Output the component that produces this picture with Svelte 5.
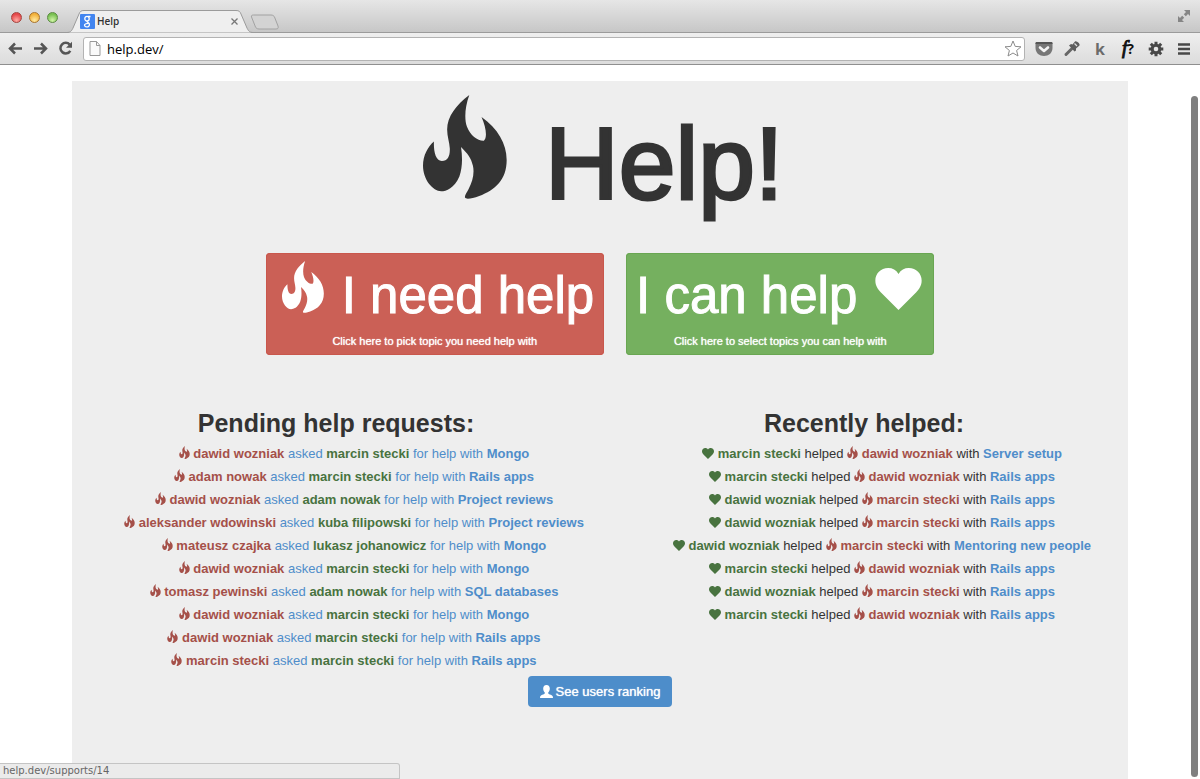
<script>
  const pending = [
    ['dawid wozniak', 'marcin stecki', 'Mongo'],
    ['adam nowak', 'marcin stecki', 'Rails apps'],
    ['dawid wozniak', 'adam nowak', 'Project reviews'],
    ['aleksander wdowinski', 'kuba filipowski', 'Project reviews'],
    ['mateusz czajka', 'lukasz johanowicz', 'Mongo'],
    ['dawid wozniak', 'marcin stecki', 'Mongo'],
    ['tomasz pewinski', 'adam nowak', 'SQL databases'],
    ['dawid wozniak', 'marcin stecki', 'Mongo'],
    ['dawid wozniak', 'marcin stecki', 'Rails apps'],
    ['marcin stecki', 'marcin stecki', 'Rails apps']
  ];
  const helped = [
    ['marcin stecki', 'dawid wozniak', 'Server setup'],
    ['marcin stecki', 'dawid wozniak', 'Rails apps'],
    ['dawid wozniak', 'marcin stecki', 'Rails apps'],
    ['dawid wozniak', 'marcin stecki', 'Rails apps'],
    ['dawid wozniak', 'marcin stecki', 'Mentoring new people'],
    ['marcin stecki', 'dawid wozniak', 'Rails apps'],
    ['dawid wozniak', 'marcin stecki', 'Rails apps'],
    ['marcin stecki', 'dawid wozniak', 'Rails apps']
  ];
  let url = $state('help.dev/');
</script>

{#snippet flame()}
  <svg class="flame" viewBox="70 44 254 314" aria-hidden="true">
    <path d="M210 44C196 82 195 118 203 140C213 167 236 183 254 182C265 173 261 142 247 110C296 145 323 190 323 240C323 300 288 331 240 349C218 357 200 360 197 354C195 348 203 338 208 328C220 305 226 280 221 258C216 235 205 221 185 201C190 235 189 265 180 290C165 325 140 335 125 335C100 335 70 300 70 258C70 225 85 200 103 184C102 215 108 243 127 243C145 243 152 228 151 205C150 185 143 170 143 148C143 110 170 74 210 44Z" />
  </svg>
{/snippet}

{#snippet heart()}
  <svg class="heart" viewBox="0 0 140 127" aria-hidden="true">
    <path d="M70 18C77 6 88 0 101 0C124 0 140 17 140 38C140 54 132 65 123 74L70 127L17 74C8 65 0 54 0 38C0 17 16 0 39 0C52 0 63 6 70 18Z" />
  </svg>
{/snippet}

<div class="browser">
  <header>
    <div class="titlebar">
      <div class="lights">
        <button class="light red" aria-label="Close window"></button>
        <button class="light yellow" aria-label="Minimize window"></button>
        <button class="light green" aria-label="Zoom window"></button>
      </div>
      <div class="tab">
        <svg class="tab-shape" viewBox="0 0 186 23" preserveAspectRatio="none" aria-hidden="true">
          <path d="M0 22.500C4 22.500 5 20 6 18L12 4C13 1.500 14 .5 17 .5H169C172 .5 173 1.500 174 4L180 18C181 20 182 22.500 186 22.500" fill="#efefef" stroke="#9b9b9b" />
        </svg>
        <svg class="favicon" viewBox="0 0 15 15" aria-hidden="true">
          <rect width="15" height="15" rx="1" fill="#4285f0" />
          <g fill="none" stroke="#fff" stroke-width="1.300">
            <ellipse cx="7" cy="4.700" rx="2.200" ry="2.300" />
            <path d="M8 2.500H10.500M7.500 7C6 8 8.800 8.500 9.300 9.800C10 12 8 13 6.800 12.900C5 12.800 4.200 11.600 4.700 10.500C5.300 9.400 7 9.300 8.400 9.300" />
          </g>
        </svg>
        <span class="tab-title">Help</span>
        <button class="tab-close" aria-label="Close tab">
          <svg width="7" height="7" viewBox="0 0 7 7"><path d="M.5.5L6.500 6.500M6.500.5L.5 6.500" stroke="#777" stroke-width="1.300" /></svg>
        </button>
      </div>
      <button class="new-tab" aria-label="New tab">
        <svg width="30" height="16" viewBox="0 0 30 16"><path d="M1.500 3C1 1.500 2 1 3.500 1H21C23 1 24 2 24.500 3L28 12C28.700 14 28 15 26 15H9C7 15 6 14 5.500 13Z" fill="#d3d3d3" stroke="#a2a2a2" /></svg>
      </button>
      <button class="expand" aria-label="Full screen">
        <svg width="14" height="14" viewBox="0 0 14 14" fill="#858585"><path d="M7 1H13V7L11 5L8.800 7.200L6.800 5.200L9 3Z" /><path d="M1 7V13H7L5 11L7.200 8.800L5.200 6.800L3 9Z" /></svg>
      </button>
    </div>

    <div class="toolbar">
      <button aria-label="Back"><svg width="15" height="13" viewBox="0 0 15 13"><path d="M14 6.500H2.500M7 1.500L2 6.500L7 11.500" class="arrow" /></svg></button>
      <button aria-label="Forward"><svg width="15" height="13" viewBox="0 0 15 13"><path d="M1 6.500H12.500M8 1.500L13 6.500L8 11.500" class="arrow" /></svg></button>
      <button aria-label="Reload"><svg width="15" height="15" viewBox="0 0 15 15"><path d="M11.700 3.600A5.300 5.300 0 1 0 12.300 9.800" class="arrow" /><path d="M14 .8V6.800H8Z" fill="#555" /></svg></button>
      <div class="address">
        <svg width="12" height="15" viewBox="0 0 12 15" aria-hidden="true"><path d="M1 .5H7.500L11 4.500V14.500H1ZM7.500 .5V4.500H11" fill="#fafafa" stroke="#999" /></svg>
        <input aria-label="Address" type="text" bind:value={url} />
        <button aria-label="Bookmark this page"><svg width="18" height="17" viewBox="0 0 18 17"><path d="M9 1L11.200 6.400L17 6.800L12.600 10.500L14 16L9 13L4 16L5.400 10.500L1 6.800L6.800 6.400Z" fill="#fff" stroke="#8b8b8b" stroke-linejoin="round" /></svg></button>
      </div>
      <div class="extensions">
        <button aria-label="Pocket"><svg width="18" height="16" viewBox="0 0 18 16"><path d="M2 1H16C17 1 17.500 1.500 17.500 2.500V7C17.500 12 13.500 15 9 15S.5 12 .5 7V2.500C.5 1.500 1 1 2 1Z" fill="#777" /><path d="M.5 3V2.500C.5 1.500 1 1 2 1H16C17 1 17.500 1.500 17.500 2.500V3Z" fill="#555" /><path d="M5 6.500L9 10L13 6.500" fill="none" stroke="#f4f4f4" stroke-width="2.600" stroke-linecap="round" stroke-linejoin="round" /></svg></button>
        <button aria-label="Color picker"><svg width="18" height="17" viewBox="0 0 18 17"><path d="M3 14.500L9.500 8" stroke="#666" stroke-width="3" stroke-linecap="round" /><path d="M6 5.500L8 4L9.500 4.500L12 1.500C13.500 .5 17.500 4 16.500 5.500L13 8.500V10.500L11.500 11.500Z" fill="#5c5c5c" /><path d="M11.500 3.500L14 6" stroke="#ddd" stroke-width="1.200" /></svg></button>
        <button class="k" aria-label="k extension">k</button>
        <button class="font" aria-label="Font finder"><i>f</i>?</button>
        <button aria-label="Settings"><svg width="16" height="16" viewBox="0 0 16 16"><g stroke="#484848" stroke-width="3"><path d="M8 .7V15.300M.7 8H15.300M2.800 2.800L13.200 13.200M13.200 2.800L2.800 13.200" /></g><circle cx="8" cy="8" r="5.300" fill="#484848" /><circle cx="8" cy="8" r="2.300" fill="#e7e7e7" /></svg></button>
        <button aria-label="Menu"><svg width="12" height="12" viewBox="0 0 12 12"><path d="M0 1.500H12M0 6H12M0 10.500H12" stroke="#484848" stroke-width="2.400" /></svg></button>
      </div>
    </div>
  </header>

  <div class="viewport">
    <main>
      <h1>{@render flame()} Help!</h1>

      <div class="actions">
        <button class="action need">
          <span class="label">{@render flame()} I need help</span>
          <span class="hint">Click here to pick topic you need help with</span>
        </button>
        <button class="action can">
          <span class="label">I can help {@render heart()}</span>
          <span class="hint">Click here to select topics you can help with</span>
        </button>
      </div>

      <div class="columns">
        <section>
          <h2>Pending help requests:</h2>
          <ul>
            {#each pending as [from, to, topic]}
              <li><a href="#support">{@render flame()} <b class="seeker">{from}</b> asked <b class="helper">{to}</b> for help with <b>{topic}</b></a></li>
            {/each}
          </ul>
        </section>
        <section>
          <h2>Recently helped:</h2>
          <ul>
            {#each helped as [by, who, topic]}
              <li><span class="helper">{@render heart()} <b>{by}</b></span> helped <span class="seeker">{@render flame()} <b>{who}</b></span> with <a href="#topic"><b>{topic}</b></a></li>
            {/each}
          </ul>
        </section>
      </div>

      <a class="ranking" href="#ranking">
        <svg width="13" height="13" viewBox="0 0 13 13" aria-hidden="true"><path d="M6.500 0C8.700 0 9.800 1.500 9.800 3.600C9.800 5.200 9.200 6.600 8.200 7.500C8 8.600 8.600 9 10 9.500C12 10.200 13 10.800 13 13H0C0 10.800 1 10.200 3 9.500C4.400 9 5 8.600 4.800 7.500C3.800 6.600 3.200 5.200 3.200 3.600C3.200 1.500 4.300 0 6.500 0Z" /></svg>
        See users ranking
      </a>
    </main>
    <div class="scroll-thumb"></div>
    <div class="status">help.dev/supports/14</div>
  </div>
</div>

<style>
  :global(body) {
    margin: 0;
    background: #fff;
  }

  .browser {
    display: flex;
    flex-direction: column;
    height: 100vh;
    overflow: hidden;
    font: 13px/23px "Liberation Sans", Arial, sans-serif;
    color: #333;
  }

  button {
    padding: 0;
    border: 0;
    background: none;
    font-family: inherit;
    color: inherit;
  }

  svg {
    display: block;
  }

  /* window chrome */
  header {
    flex: none;
    font-family: "Open Sans", "Noto Sans", sans-serif;
  }

  .titlebar {
    display: flex;
    align-items: flex-end;
    height: 33px;
    background: linear-gradient(#e6e6e6, #c6c6c6);
    box-shadow: inset 0 -1px #9b9b9b;
  }

  .lights {
    display: flex;
    gap: 7px;
    padding: 0 9px 10px 11px;
  }

  .light {
    box-sizing: border-box;
    width: 11px;
    height: 11px;
    border: 1px solid;
    border-radius: 50%;
  }

  .light.red {
    border-color: #a5453f;
    background: radial-gradient(circle at 50% 80%, #ffaaa2, #e5484a 70%);
  }

  .light.yellow {
    border-color: #a9742e;
    background: radial-gradient(circle at 50% 80%, #ffeaa0, #f2b13b 70%);
  }

  .light.green {
    border-color: #5b8b41;
    background: radial-gradient(circle at 50% 80%, #d2f5a8, #79c052 70%);
  }

  .tab {
    position: relative;
    display: flex;
    align-items: center;
    box-sizing: border-box;
    width: 186px;
    height: 23px;
    padding: 0 15px 0 13px;
  }

  .tab-shape {
    position: absolute;
    inset: 0;
    width: 100%;
    height: 100%;
  }

  .favicon {
    position: relative;
    width: 15px;
    height: 15px;
  }

  .tab-title {
    position: relative;
    flex: 1;
    padding-left: 2px;
    font-size: 10px;
    font-weight: 600;
    color: #333;
  }

  .tab-close {
    position: relative;
  }

  .new-tab {
    padding-bottom: 3px;
    margin-left: -3px;
  }

  .expand {
    margin-left: auto;
    padding: 0 9px 10px 0;
  }

  .toolbar {
    display: flex;
    align-items: center;
    gap: 10px;
    box-sizing: border-box;
    height: 32px;
    padding: 0 7px 0 8px;
    background: linear-gradient(#efefef, #dcdcdc);
    border-bottom: 1px solid #8f8f8f;
  }

  .arrow {
    fill: none;
    stroke: #555;
    stroke-width: 2.5px;
  }

  .address {
    display: flex;
    flex: 1;
    align-items: center;
    gap: 6px;
    box-sizing: border-box;
    height: 24px;
    padding: 0 2px 0 5px;
    border: 1px solid #b3b3b3;
    border-radius: 3px;
    background: #fff;
  }

  .address input {
    flex: 1;
    min-width: 0;
    padding: 0;
    border: 0;
    outline: 0;
    background: none;
    font: 13px/20px "Open Sans", "Noto Sans", sans-serif;
    color: #000;
  }

  .extensions {
    display: grid;
    grid-template-columns: repeat(6, 18px);
    align-items: center;
    justify-items: center;
    gap: 10px;
  }

  .k {
    font: bold 16px/20px "Open Sans", sans-serif;
    color: #6b6b6b;
  }

  .font {
    font: bold 14px/20px "Open Sans", sans-serif;
    color: #111;
  }

  .font i {
    font: italic 19px/20px "Liberation Serif", serif;
    -webkit-text-stroke: 1px;
  }

  /* page */
  .viewport {
    position: relative;
    flex: 1;
    min-height: 0;
    overflow: hidden;
    background: #fff;
  }

  main {
    box-sizing: border-box;
    max-width: 1056px;
    min-height: 100%;
    margin: 16px auto 0;
    padding-top: 14px;
    background: #eee;
    text-align: center;
  }

  main svg {
    fill: currentColor;
  }

  .flame,
  .heart {
    display: inline-block;
    vertical-align: baseline;
  }

  h1 {
    margin: 0 0 34px;
    font-size: 102px;
    font-weight: normal;
    line-height: 110px;
    -webkit-text-stroke: 3px;
  }

  h1 .flame {
    width: 84px;
    height: 104px;
    margin: 0 10px 0 6px;
  }

  .actions {
    display: flex;
    justify-content: center;
    gap: 22px;
  }

  .action {
    padding: 8px 10px 6px;
    border-radius: 4px;
    color: #fff;
  }

  .need {
    background: #cb6056;
    box-shadow: inset 0 0 0 1px #c9574c;
  }

  .can {
    background: #75b05f;
    box-shadow: inset 0 0 0 1px #69a652;
  }

  .label,
  .hint {
    display: block;
  }

  .label {
    font-size: 51px;
    line-height: 68px;
    -webkit-text-stroke: 1px;
  }

  .label .flame {
    width: 42px;
    height: 52px;
    margin: 0 4px 0 6px;
  }

  .label .heart {
    width: 47px;
    height: 42px;
    margin: 0 2px 3px 4px;
  }

  .hint {
    margin-top: 3px;
    font-size: 11px;
    line-height: 16px;
    text-shadow: 0 0 1px #fff;
  }

  .columns {
    display: grid;
    grid-template-columns: 1fr 1fr;
    margin-top: 54px;
  }

  h2 {
    margin: 0 0 5px;
    font-size: 25px;
    line-height: 28px;
  }

  ul {
    margin: 0 0 4px;
    padding: 0 0 0 36px;
    list-style: none;
  }

  a {
    color: #4f8dca;
    text-decoration: none;
  }

  .seeker {
    color: #a55049;
  }

  .helper {
    color: #48733f;
  }

  li .flame,
  li .heart {
    vertical-align: -1px;
  }

  li .flame {
    width: 11px;
    height: 13px;
    color: #a55049;
  }

  li .heart {
    width: 12px;
    height: 11px;
  }

  .ranking {
    display: inline-flex;
    align-items: center;
    gap: 3px;
    padding: 0 12px;
    border-radius: 4px;
    background: #4d8dca;
    line-height: 31px;
    color: #fff;
    text-shadow: 0 0 1px #fff;
  }

  .scroll-thumb {
    position: absolute;
    top: 31px;
    right: 2px;
    bottom: 2px;
    width: 7px;
    border-radius: 4px;
    background: #7f7f7f;
  }

  .status {
    position: absolute;
    bottom: 0;
    left: 0;
    box-sizing: border-box;
    width: 400px;
    padding-left: 3px;
    border: 1px solid #c4c4c4;
    border-left: 0;
    border-radius: 0 3px 0 0;
    background: #ebebeb;
    font: 10px/14px "DejaVu Sans", sans-serif;
    color: #666;
  }
</style>
